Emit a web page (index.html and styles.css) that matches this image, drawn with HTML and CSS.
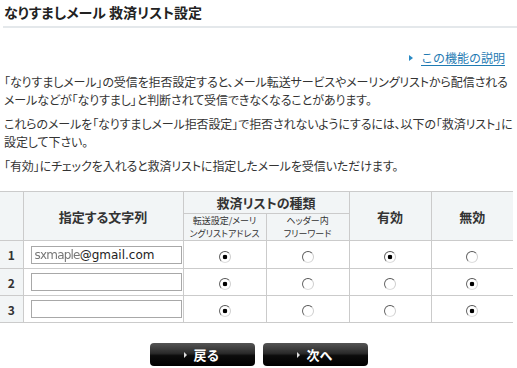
FILE: index.html
```html
<!DOCTYPE html>
<html lang="ja">
<head>
<meta charset="utf-8">
<title>なりすましメール 救済リスト設定</title>
<link rel="stylesheet" href="styles.css">
</head>
<body>
<h1 class="page-title">なりすましメール 救済リスト設定</h1>
<div class="content">
  <p class="help"><a href="#" class="help-link">この機能の説明</a></p>
  <p class="text">「なりすましメール」の受信を拒否設定すると、メール転送サービスやメーリングリストから配信される<br>メールなどが「なりすまし」と判断されて受信できなくなることがあります。</p>
  <p class="text">これらのメールを「なりすましメール拒否設定」で拒否されないようにするには、以下の「救済リスト」に<br>設定して下さい。</p>
  <p class="text">「有効」にチェックを入れると救済リストに指定したメールを受信いただけます。</p>

  <table class="list">
    <colgroup>
      <col class="c-no"><col class="c-str"><col class="c-type"><col class="c-type"><col class="c-flag"><col class="c-flag">
    </colgroup>
    <thead>
      <tr class="h1row">
        <th class="no" rowspan="2"></th>
        <th rowspan="2">指定する文字列</th>
        <th colspan="2">救済リストの種類</th>
        <th rowspan="2">有効</th>
        <th class="last" rowspan="2">無効</th>
      </tr>
      <tr class="h2row">
        <th class="sub">転送設定/メーリ<br>ングリストアドレス</th>
        <th class="sub">ヘッダー内<br>フリーワード</th>
      </tr>
    </thead>
    <tbody>
      <tr class="r1">
        <td class="no">1</td>
        <td class="str"><div class="field"><span class="masked">sxmaple</span>@gmail.com</div></td>
        <td class="rad"><input type="radio" name="t1" checked></td>
        <td class="rad"><input type="radio" name="t1"></td>
        <td class="rad"><input type="radio" name="e1" checked></td>
        <td class="rad last"><input type="radio" name="e1"></td>
      </tr>
      <tr>
        <td class="no">2</td>
        <td class="str"><div class="field"></div></td>
        <td class="rad"><input type="radio" name="t2" checked></td>
        <td class="rad"><input type="radio" name="t2"></td>
        <td class="rad"><input type="radio" name="e2"></td>
        <td class="rad last"><input type="radio" name="e2" checked></td>
      </tr>
      <tr>
        <td class="no">3</td>
        <td class="str"><div class="field"></div></td>
        <td class="rad"><input type="radio" name="t3" checked></td>
        <td class="rad"><input type="radio" name="t3"></td>
        <td class="rad"><input type="radio" name="e3"></td>
        <td class="rad last"><input type="radio" name="e3" checked></td>
      </tr>
    </tbody>
  </table>

  <div class="actions">
    <button class="btn" type="button">戻る</button>
    <button class="btn" type="button">次へ</button>
  </div>
</div>
</body>
</html>
```
FILE: styles.css
```css
html, body {
  margin: 0;
  padding: 0;
  background: #fff;
}
body {
  font-family: "Noto Sans CJK JP", "Noto Sans", sans-serif;
  color: #333;
  font-size: 12px;
  width: 517px;
}
.page-title {
  margin: 0 0 0 3px;
  padding: 2px 0 4px 1px;
  font-size: 14px;
  line-height: 20px;
  font-weight: bold;
  color: #222;
  border-bottom: 2px solid #e4e8eb;
  font-feature-settings: "palt";
}
.help {
  margin: 19px 0 0;
  padding-right: 12px;
  text-align: right;
  line-height: 18px;
}
.help-link {
  color: #1f7bb3;
  text-decoration: none;
  display: inline-flex;
  align-items: center;
  background: linear-gradient(#1f7bb3, #1f7bb3) no-repeat;
  background-size: calc(100% - 12px) 1px;
  background-position: right bottom 1px;
}
.help-link::before {
  content: "";
  width: 0;
  height: 0;
  border-left: 4px solid #2a8ac4;
  border-top: 3px solid transparent;
  border-bottom: 3px solid transparent;
  margin-right: 8px;
}
.text {
  margin: 6px 0 0 4px;
  line-height: 18px;
  font-size: 12px;
  white-space: nowrap;
  font-feature-settings: "palt";
  letter-spacing: -0.1px;
}
.list {
  margin-top: 16px;
  border-collapse: collapse;
  table-layout: fixed;
  width: 513px;
}
.c-no { width: 23px; }
.c-str { width: 160px; }
.c-type { width: 83px; }
.c-flag { width: 82px; }
.list th, .list td {
  border: 1px solid #cbcbcb;
  padding: 0;
}
.list th.no, .list td.no { border-left: none; }
.list .last { border-right: none; }
.list th {
  background: #f2f5f6;
  font-size: 13px;
  font-weight: bold;
  color: #333;
  font-feature-settings: "palt";
}
.h1row { height: 22px; }
.h2row { height: 26px; }
.list th.sub {
  font-size: 9px;
  font-weight: normal;
  line-height: 13.1px;
  padding: 0;
  vertical-align: middle;
}
.list td.no {
  background: #f2f5f6;
  font-weight: bold;
  font-size: 12px;
  text-align: center;
}
.list tbody tr { height: 27px; }
.list tbody tr.r1 { height: 28px; }
.list td.str { padding-left: 7px; }
.field {
  width: 146px;
  height: 16px;
  border: 1px solid #a8a8a8;
  font-family: "DejaVu Sans", "Noto Sans", sans-serif;
  font-size: 12px;
  line-height: 16px;
  padding-left: 3px;
  color: #222;
  box-sizing: content-box;
  white-space: nowrap;
  overflow: hidden;
}
.masked {
  color: #777;
  filter: blur(0.7px);
  letter-spacing: -0.8px;
}
.rad { text-align: center; }
.rad input {
  -webkit-appearance: none;
  appearance: none;
  width: 12px;
  height: 12px;
  margin: 0;
  border-radius: 50%;
  border: 1px solid;
  border-color: #555 #cfcfcf #dedede #666;
  background: #fff;
  vertical-align: middle;
  box-sizing: border-box;
}
.rad input:checked {
  background: radial-gradient(circle, #000 0, #000 2px, #fff 2.6px);
}
.actions {
  display: flex;
  justify-content: center;
  gap: 8px;
  margin-top: 20px;
}
.btn {
  width: 105px;
  height: 23px;
  border: none;
  border-radius: 4px;
  background: linear-gradient(#555 0%, #2a2a2a 45%, #0c0c0c 55%, #000 100%);
  color: #fff;
  font-family: "Noto Sans CJK JP", sans-serif;
  font-weight: bold;
  font-size: 13px;
  display: flex;
  align-items: center;
  justify-content: center;
  padding: 0;
}
.btn::before {
  content: "";
  width: 0;
  height: 0;
  border-left: 3px solid #ddd;
  border-top: 3px solid transparent;
  border-bottom: 3px solid transparent;
  margin-right: 6px;
}
```
